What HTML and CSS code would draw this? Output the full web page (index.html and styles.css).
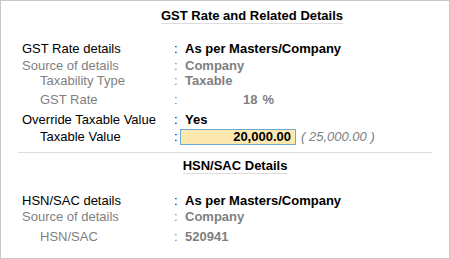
FILE: index.html
```html
<!DOCTYPE html>
<html>
<head>
<meta charset="utf-8">
<link rel="stylesheet" href="styles.css">
</head>
<body>
<div class="panel">
  <div class="title-wrap"><div class="title">GST Rate and Related Details</div></div>
  <div class="grid gst">
    <div class="lbl">GST Rate details</div><div class="col">:</div><div class="val b">As per Masters/Company</div>
    <div class="lbl gray">Source of details</div><div class="col gray">:</div><div class="val b gray">Company</div>
    <div class="lbl gray ind">Taxability Type</div><div class="col gray">:</div><div class="val b gray">Taxable</div>
    <div class="lbl gray ind">GST Rate</div><div class="col gray">:</div><div class="val b gray"><span class="rate">18</span><span class="pct">%</span></div>
    <div class="lbl">Override Taxable Value</div><div class="col">:</div><div class="val b">Yes</div>
    <div class="lbl ind">Taxable Value</div><div class="col">:</div><div class="val inline"><span class="input">20,000.00</span><span class="orig">( 25,000.00 )</span></div>
  </div>
  <div class="section">
    <div class="title-wrap"><div class="title">HSN/SAC Details</div></div>
    <div class="grid hsn">
      <div class="lbl">HSN/SAC details</div><div class="col">:</div><div class="val b">As per Masters/Company</div>
      <div class="lbl gray">Source of details</div><div class="col gray">:</div><div class="val b gray">Company</div>
      <div class="lbl gray ind">HSN/SAC</div><div class="col gray">:</div><div class="val b gray">520941</div>
    </div>
  </div>
</div>
</body>
</html>
```

FILE: styles.css
```css
html, body {
  margin: 0;
  padding: 0;
  background: #ffffff;
}
.panel {
  box-sizing: border-box;
  width: 450px;
  height: 259px;
  border: 1px solid #c8c8c8;
  padding-top: 8px;
  font-family: "Liberation Sans", Arial, sans-serif;
  font-size: 13px;
  color: #000;
}
.title-wrap {
  display: flex;
  justify-content: center;
  padding-left: 54px;
}
.title {
  font-weight: bold;
  line-height: 14px;
  border-bottom: 1px solid #dcdcdc;
}
.grid {
  display: grid;
  grid-template-columns: 151px 7px 1fr;
  padding-left: 21px;
  align-items: start;
  line-height: 16px;
}
.gst {
  margin-top: 17px;
  grid-template-rows: 17px 15px 19px 20px 17px 16px;
}
.hsn {
  margin-top: 19px;
  grid-template-rows: 16px 20px 16px;
}
.col {
  padding-left: 1px;
}
.val {
  padding-left: 5px;
}
.b {
  font-weight: bold;
}
.gray {
  color: #7f7f7f;
}
.ind {
  padding-left: 18px;
}
.rate {
  display: inline-block;
  padding-left: 58px;
}
.pct {
  margin-left: 5px;
}
.inline {
  padding-left: 0;
  display: flex;
  align-items: center;
}
.input {
  box-sizing: border-box;
  width: 116px;
  height: 16px;
  line-height: 14px;
  background: #fde8b0;
  border: 1px solid #6aaad4;
  text-align: right;
  padding-right: 4px;
  font-weight: bold;
}
.orig {
  margin-left: 5px;
  font-style: italic;
  color: #808080;
}
.section {
  margin: 7px 17px 0 17px;
  border-top: 1px solid #dcdcdc;
  padding-top: 6px;
}
.section .title-wrap {
  padding-left: 20px;
}
.section .grid {
  padding-left: 4px;
}
```
